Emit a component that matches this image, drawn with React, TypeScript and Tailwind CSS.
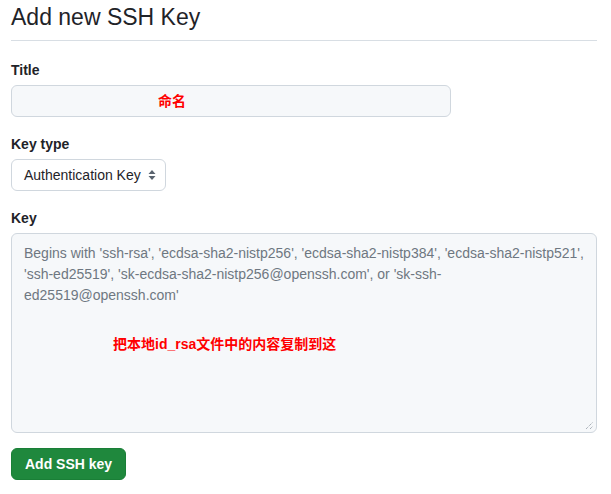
import React from 'react';

// Add SSH key form, GitHub settings style, with the red notes from the screenshot

const font = { fontFamily: '"Liberation Sans", "Noto Sans CJK SC", sans-serif' };

const Label: React.FC<{ text: string }> = ({ text }) => (
  <div className="text-[14px] leading-5 font-bold text-[#1f2328] pt-[3px]">{text}</div>
);

const App: React.FC = () => {
  return (
    <div className="min-h-screen bg-white pl-[11px] pr-[14px]" style={font}>
      {/* Heading */}
      <div className="border-b border-[#d8dee4] pt-[1px] pb-[6px]">
        <h1 className="text-[23px] leading-[33px] font-normal text-[#1f2328]">Add new SSH Key</h1>
      </div>

      <form className="pt-[16px]">
        {/* Title */}
        <Label text="Title" />
        <div className="mt-[5px] w-[440px] h-[32px] rounded-md border border-[#d0d7de] bg-[#f6f8fa] flex items-center pl-[146px]">
          <span className="text-[14px] font-bold text-[#ff0000]">命名</span>
        </div>

        {/* Key type */}
        <div className="mt-[14px]">
          <Label text="Key type" />
          <div className="mt-[5px] inline-flex items-center h-[32px] rounded-md border border-[#d0d7de] bg-white pl-3 pr-[9px] gap-[7px]">
            <span className="text-[14px] text-[#1f2328]">Authentication Key</span>
            <svg width="8" height="12" viewBox="0 0 8 12" className="text-[#59636e]">
              <path d="M4 1 L7.5 5 H0.5 Z" fill="currentColor" />
              <path d="M4 11 L7.5 7 H0.5 Z" fill="currentColor" />
            </svg>
          </div>
        </div>

        {/* Key */}
        <div className="mt-[14px]">
          <Label text="Key" />
          <div className="relative mt-[5px] h-[200px] rounded-md border border-[#d0d7de] bg-[#f6f8fa] px-3 pt-[9px]">
            <p className="text-[14px] leading-[21px] text-[#6e7781]">
              Begins with 'ssh-rsa', 'ecdsa-sha2-nistp256', 'ecdsa-sha2-nistp384', 'ecdsa-sha2-nistp521',
              'ssh-ed25519', 'sk-ecdsa-sha2-nistp256@openssh.com', or 'sk-ssh-ed25519@openssh.com'
            </p>
            <p className="mt-[28px] pl-[89px] text-[14px] leading-5 font-bold text-[#ff0000]">
              把本地id_rsa文件中的内容复制到这
            </p>
            {/* resize grip */}
            <svg width="9" height="9" viewBox="0 0 9 9" className="absolute right-[2px] bottom-[2px] text-[#8c959f]">
              <path d="M1 8 L8 1 M5 8 L8 5" stroke="currentColor" strokeWidth="1" strokeDasharray="1 1" />
            </svg>
          </div>
        </div>

        {/* Submit */}
        <button
          type="button"
          className="mt-[15px] h-[32px] px-[13px] rounded-md border border-[#1a7f37] bg-[#1f883d] text-[14px] font-bold text-white"
        >
          Add SSH key
        </button>
      </form>
    </div>
  );
};

export default App;
